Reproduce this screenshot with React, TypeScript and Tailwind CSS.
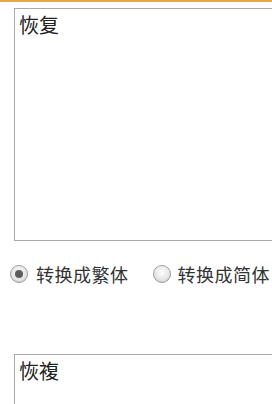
import React from "react";

function Radio({ checked }: { checked: boolean }) {
  return (
    <span className="relative inline-flex h-[18px] w-[18px] shrink-0 items-center justify-center rounded-full border border-[#9a9a9a] bg-[linear-gradient(180deg,#f4f4f4,#d6d6d6)]">
      <span className="absolute inset-[1px] rounded-full bg-[radial-gradient(circle_at_50%_40%,#ffffff,#e3e3e3_70%,#cfcfcf)]" />
      {checked && <span className="relative h-[8px] w-[8px] rounded-full bg-[#5c5c5c]" />}
    </span>
  );
}

export default function App() {
  const font = "font-['Noto_Sans_CJK_SC','Noto_Sans',sans-serif]";
  return (
    <div className={`h-[404px] w-[272px] overflow-hidden bg-white ${font}`}>
      <div className="h-[2px] bg-[#e9a640]" />
      <div className="ml-[14px] mt-[6px] h-[233px] w-[300px] border border-[#a9a9a9] px-[4px] pt-[3px] text-[20px] leading-[26px] text-[#222]">
        恢复
      </div>
      <div className="mt-[22px] flex items-center pl-[10px] text-[18px] leading-[22px] text-[#333]">
        <Radio checked />
        <span className="ml-[8px] tracking-[0.5px]">转换成繁体</span>
        <span className="ml-[24px]" />
        <Radio checked={false} />
        <span className="ml-[7px] tracking-[0.5px]">转换成简体</span>
      </div>
      <div className="ml-[14px] mt-[69px] h-[100px] w-[300px] border border-[#a9a9a9] px-[4px] pt-[3px] text-[20px] leading-[26px] text-[#222]">
        恢複
      </div>
    </div>
  );
}
